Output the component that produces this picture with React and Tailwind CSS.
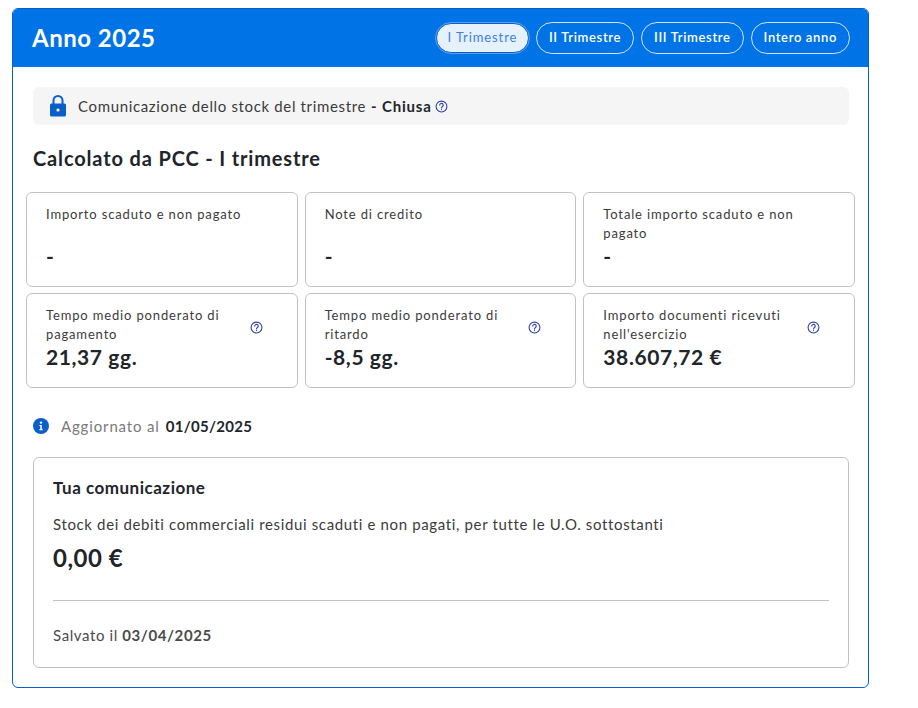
const HelpIcon = ({ className }) => (
    <svg className={className} viewBox="0 0 24 24" fill="none" stroke="#2f3fb0" strokeWidth="2">
        <circle cx="12" cy="12" r="10" />
        <path d="M8.8 9.4a3.2 3.2 0 1 1 5 2.7c-1.2.8-1.8 1.4-1.8 2.7" strokeLinecap="round" />
        <circle cx="12" cy="17.6" r="1.1" fill="#2f3fb0" stroke="none" />
    </svg>
);

const LockIcon = () => (
    <svg className="w-[18px] h-[22px] shrink-0" viewBox="0 0 18 22">
        <path d="M4.5 9V5.5a4.5 4.5 0 0 1 9 0V9" fill="none" stroke="#0b5fc9" strokeWidth="2" />
        <rect x="1" y="8.5" width="16" height="13" rx="1.5" fill="#0b5fc9" />
        <circle cx="9" cy="15" r="1.6" fill="#fff" />
    </svg>
);

const InfoIcon = () => (
    <svg className="w-4 h-4 shrink-0" viewBox="0 0 16 16">
        <circle cx="8" cy="8" r="8" fill="#0b5fc9" />
        <circle cx="8" cy="4.6" r="1.2" fill="#fff" />
        <path d="M6.4 7h2.4v4.2h1v1.1H6.3v-1.1h1V8.1h-.9z" fill="#fff" />
    </svg>
);

const tabs = ["II Trimestre", "III Trimestre", "Intero anno"];

const stats = [
    { label: "Importo scaduto e non pagato", value: "-" },
    { label: "Note di credito", value: "-" },
    { label: "Totale importo scaduto e non pagato", value: "-" },
    { label: "Tempo medio ponderato di pagamento", value: "21,37 gg.", help: true },
    { label: "Tempo medio ponderato di ritardo", value: "-8,5 gg.", help: true },
    { label: "Importo documenti ricevuti nell'esercizio", value: "38.607,72 €", help: true },
];

function StatCard({ label, value, help }) {
    return (
        <div className="h-[95px] border border-[#c2c2c2] rounded-md pl-[19px] pr-[34px] pt-[12px] flex items-start">
            <div className="flex-grow min-w-0">
                <div className="h-[38px] text-[13px] leading-[19px] tracking-[0.85px] text-[#3b3b3b]">{label}</div>
                <div className="text-[21px] leading-[26px] font-bold tracking-[0.6px] text-[#212529]">{value}</div>
            </div>
            {help && <HelpIcon className="w-[13px] h-[13px] shrink-0 mt-[15px] ml-4" />}
        </div>
    );
}

export default function App() {
    return (
        <div className="min-h-[708px] bg-white pt-2 pl-3 font-['Lato','Noto_Sans',sans-serif]">
            <div className="w-[857px] h-[680px] border border-[#0b5fc9] rounded-md overflow-hidden">
                <div className="h-[59px] bg-[#0073e6] flex items-center justify-between pl-[19px] pr-[18px] -mt-px">
                    <div className="text-[24px] font-bold tracking-[0.5px] text-white">Anno 2025</div>
                    <div className="flex items-center gap-[7px]">
                        <button className="h-[30px] w-[93px] rounded-full bg-[#e5f1fd] text-[#3f7fe0] border border-[#0b5fc9] outline outline-1 outline-[#5aa0ee] text-[13px] tracking-[0.9px]">
                            I Trimestre
                        </button>
                        {tabs.map((tab) => (
                            <button
                                className="h-[32px] px-3 rounded-full border border-[#cfe3fa] text-white text-[13px] font-semibold tracking-[0.65px]"
                                key={tab}
                            >
                                {tab}
                            </button>
                        ))}
                    </div>
                </div>

                <div className="pt-5 pl-[20px] pr-[19px]">
                    <div className="h-[38px] bg-[#f5f5f5] rounded-md flex items-center pl-4 text-[15px] tracking-[0.65px] text-[#3b3b3b]">
                        <LockIcon />
                        <span className="ml-[11px]">Comunicazione dello stock del trimestre</span>
                        <span className="ml-[5px] font-bold tracking-[0.8px] text-[#212529]">- Chiusa</span>
                        <HelpIcon className="w-[13px] h-[13px] ml-[3px]" />
                    </div>

                    <h2 className="mt-[20px] text-[20px] leading-[26px] font-bold tracking-[0.85px] text-[#212529]">
                        Calcolato da PCC - I trimestre
                    </h2>

                    <div className="mt-[21px] -ml-[7px] -mr-[6px] grid grid-cols-3 gap-x-[7px] gap-y-[6px]">
                        {stats.map((stat) => (
                            <StatCard key={stat.label} {...stat} />
                        ))}
                    </div>

                    <div className="mt-[28px] flex items-center h-5 text-[15px] tracking-[0.85px]">
                        <InfoIcon />
                        <span className="ml-[12px] text-[#7a7a7a]">Aggiornato al</span>
                        <span className="ml-[6px] font-bold tracking-[0.3px] text-[#212529]">01/05/2025</span>
                    </div>

                    <div className="mt-[21px] h-[211px] border border-[#c2c2c2] rounded-md px-[19px] pt-[20px]">
                        <div className="text-[17px] leading-[20px] font-bold tracking-[0.5px] text-[#212529]">Tua comunicazione</div>
                        <div className="mt-[16px] text-[15px] leading-[20px] tracking-[0.64px] text-[#3b3b3b]">
                            Stock dei debiti commerciali residui scaduti e non pagati, per tutte le U.O. sottostanti
                        </div>
                        <div className="mt-[9px] text-[24px] leading-[30px] font-bold tracking-[0.5px] text-[#212529]">0,00 €</div>
                        <div className="mt-[27px] border-t border-[#c2c2c2]" />
                        <div className="mt-[24px] text-[15px] leading-[20px] tracking-[0.6px] text-[#4a4a4a]">
                            Salvato il <span className="font-bold">03/04/2025</span>
                        </div>
                    </div>
                </div>
            </div>
        </div>
    );
}
